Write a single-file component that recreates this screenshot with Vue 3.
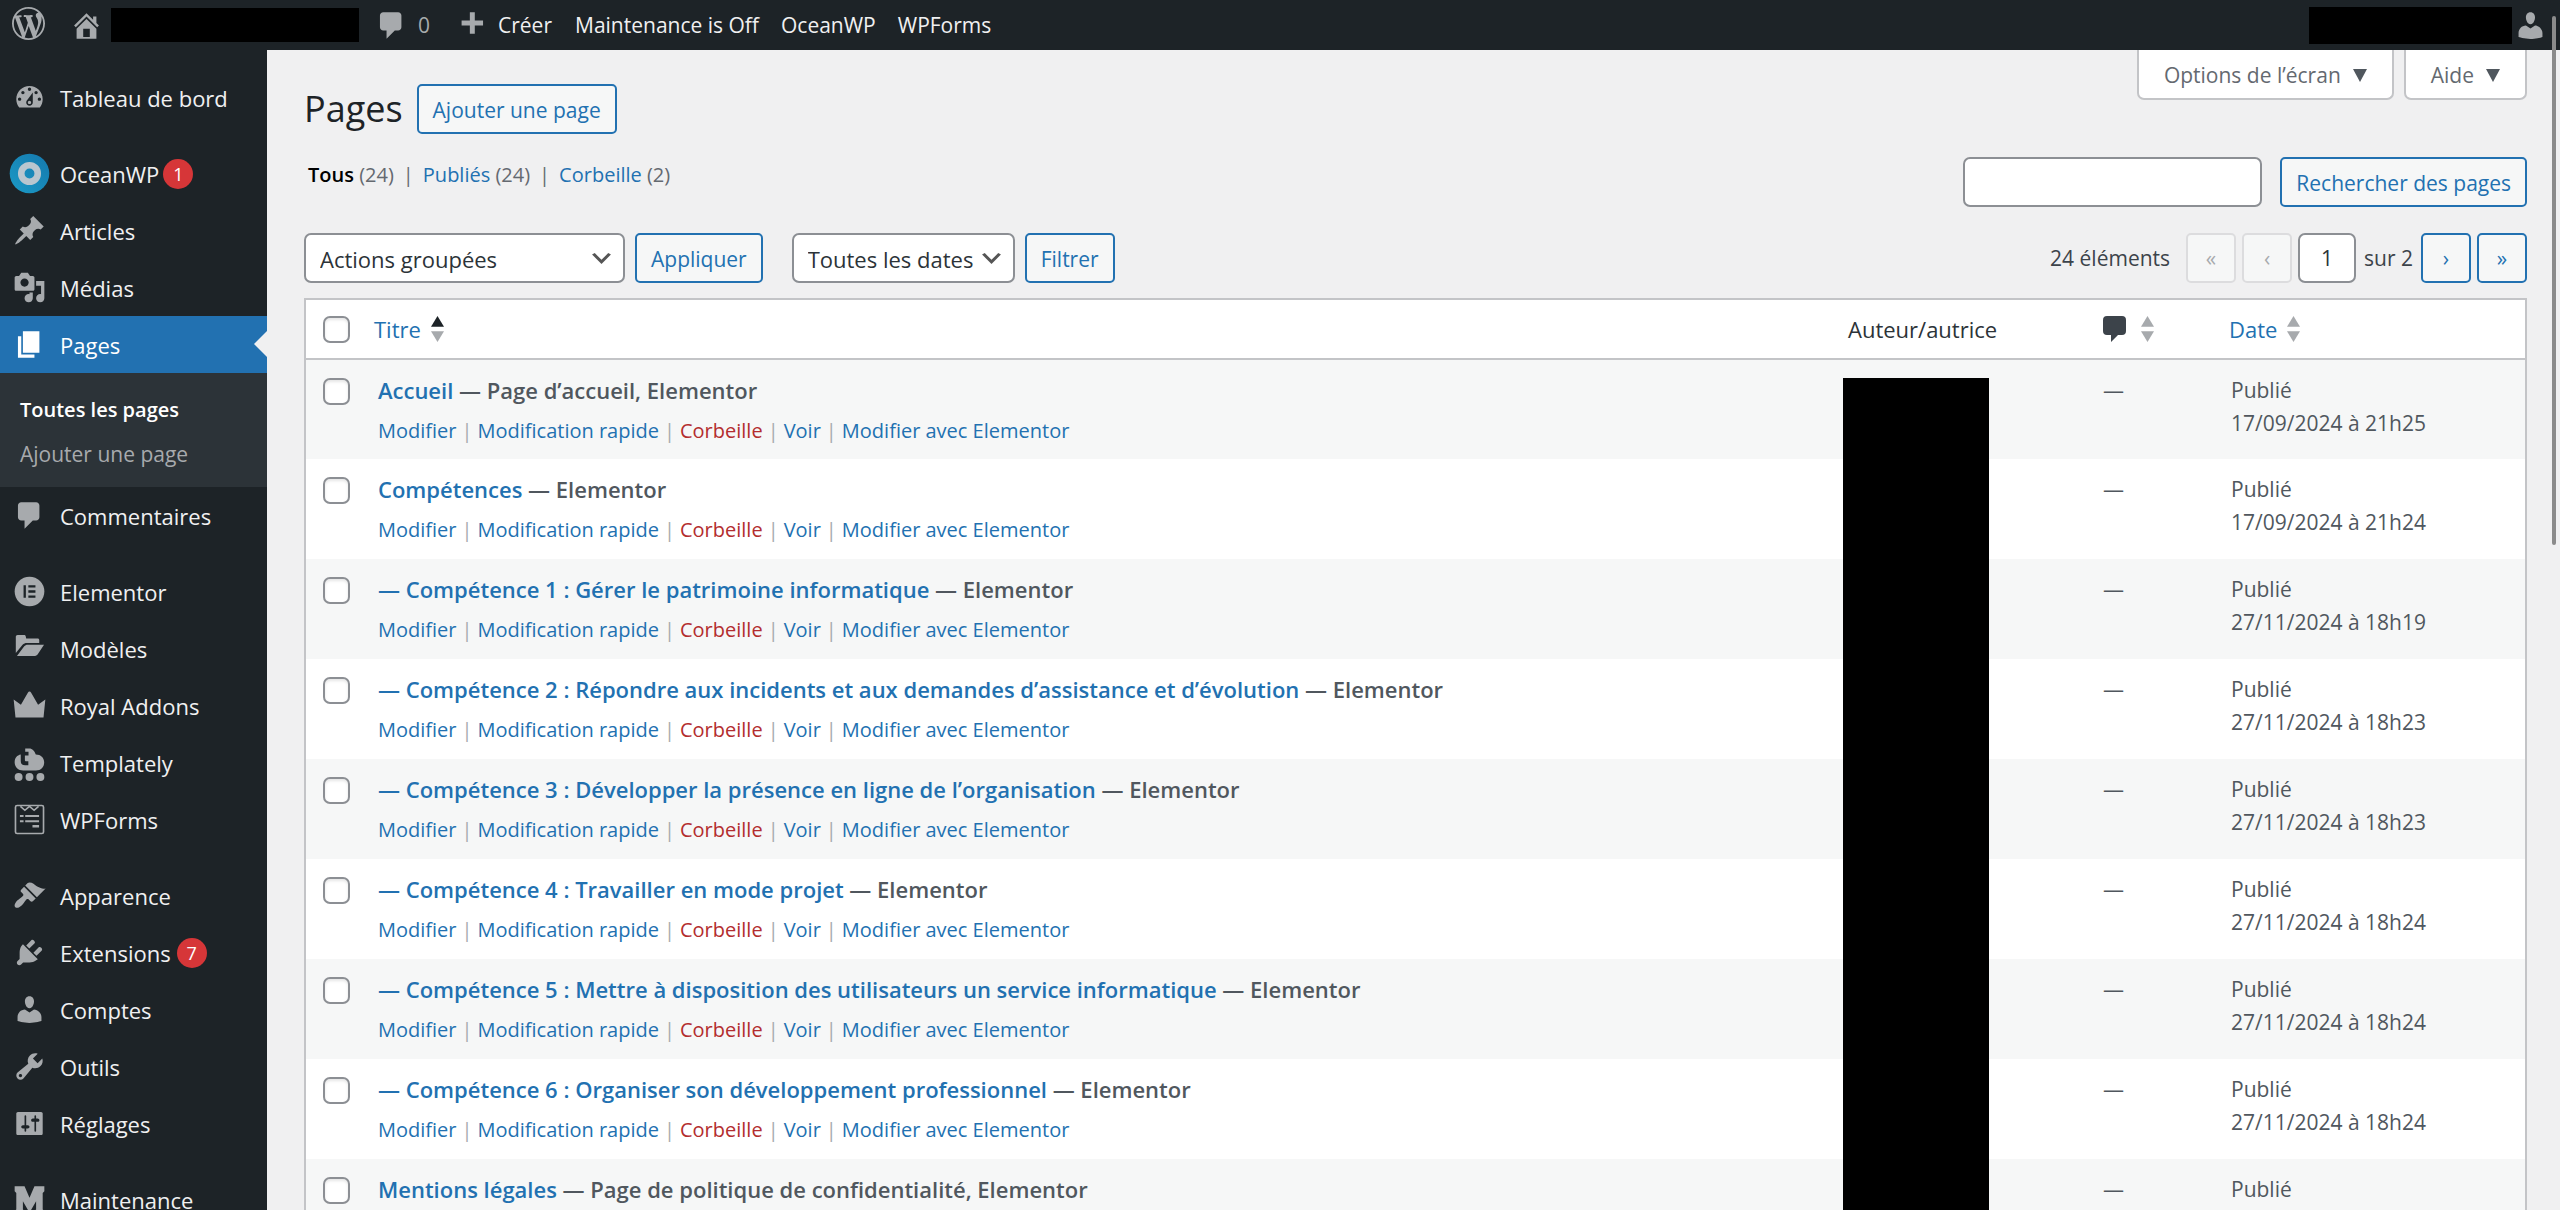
<template>
  <div class="admin">
    <header class="topbar">
      <nav class="topbar-nav" aria-label="Barre d’outils">
        <a class="bar-item bar-logo" href="#" aria-label="WordPress"><svg class="icon" viewBox="0 0 20 20"><path :d="icons.wordpress" /></svg></a>
        <a class="bar-item bar-site" href="#" aria-label="Aller sur le site">
          <svg class="icon" viewBox="0 0 20 20"><path :d="icons.home" /></svg>
          <span class="site-mask"></span>
        </a>
        <a class="bar-item bar-comments" href="#"><svg class="icon" viewBox="0 0 20 20"><path :d="icons.comments" /></svg><span class="muted">0</span></a>
        <a class="bar-item bar-new" href="#"><svg class="icon" viewBox="0 0 20 20"><path :d="icons.plus" /></svg>Créer</a>
        <span class="bar-links">
          <a v-for="label in barLinks" :key="label" class="bar-item" href="#">{{ label }}</a>
        </span>
      </nav>
      <a class="bar-account" href="#" aria-label="Mon compte">
        <span class="account-mask"></span>
        <svg class="icon" viewBox="0 0 20 20"><path :d="icons.users" /></svg>
      </a>
    </header>

    <div class="layout">
      <aside class="sidebar">
        <ul v-for="(group, i) in menu" :key="i" class="menu-group">
          <li v-for="item in group" :key="item.label">
            <a class="menu-link" :class="{ current: item.children }" href="#">
              <svg class="menu-icon" viewBox="0 0 20 20" aria-hidden="true">
                <template v-if="item.icon === 'ocean'">
                  <defs>
                    <linearGradient id="ocean-fill" x1="1" y1="0" x2="0" y2="1">
                      <stop offset="0" stop-color="#1578ad" />
                      <stop offset="1" stop-color="#1b9ac6" />
                    </linearGradient>
                  </defs>
                  <circle cx="10" cy="10" r="12" fill="url(#ocean-fill)" />
                  <circle cx="10" cy="10" r="5" fill="none" stroke="#b9c6cf" stroke-width="4" />
                </template>
                <template v-else-if="item.icon === 'elementor'">
                  <circle cx="10" cy="10" r="9" />
                  <path class="cut" d="M6.4 6.2h1.4v7.6H6.4zM9.3 6.2h4.3v1.4H9.3zM9.3 9.3h4.3v1.4H9.3zM9.3 12.4h4.3v1.4H9.3z" />
                </template>
                <template v-else-if="item.icon === 'templately'">
                  <path d="M7.4 1.5h2.4c2 0 3.2 1.5 4 3.7 3 0 5.1 2 5.1 4.7 0 3-2 5-5 5H6.2c-3 0-5.2-2.1-5.2-5 0-2.6 1.5-4.3 3.7-4.7v3.9c0 1.7.9 2.6 2.6 2.6h2V9.3H8c-.5 0-.8-.3-.8-.8V5.7h2.2V3.5h-2z" />
                  <circle cx="3.4" cy="18.8" r="2.4" />
                  <circle cx="10" cy="18.8" r="2.4" />
                  <circle cx="16.6" cy="18.8" r="2.4" />
                </template>
                <template v-else-if="item.icon === 'wpforms'">
                  <rect class="line" x="1.5" y="1.5" width="17" height="17" rx="1" />
                  <path class="line" d="M4.5 2l2.7 2.4L10 2l2.8 2.4L15.5 2" />
                  <path d="M4.2 7.2h2.2v1.3H4.2zM7.4 7.2h8.4v1.3H7.4zM4.2 10.4h2.2v1.3H4.2zM7.4 10.4h8.4v1.3H7.4zM11.8 13.4h4v1.4h-4z" />
                </template>
                <path v-else fill-rule="evenodd" :d="icons[item.icon]" />
              </svg>
              <span>{{ item.label }}</span>
              <span v-if="item.count" class="count" :class="{ tight: item.icon === 'ocean' }">{{ item.count }}</span>
            </a>
            <ul v-if="item.children" class="submenu">
              <li v-for="(child, c) in item.children" :key="child">
                <a href="#" :class="{ active: c === 0 }">{{ child }}</a>
              </li>
            </ul>
          </li>
        </ul>
      </aside>

      <main class="content">
        <div class="content-head">
          <div class="heading">
            <h1>Pages</h1>
            <button class="button" type="button">Ajouter une page</button>
          </div>
          <div class="screen-meta">
            <button type="button">Options de l’écran <span class="caret"></span></button>
            <button type="button">Aide <span class="caret"></span></button>
          </div>
        </div>

        <div class="filters">
          <ul class="views">
            <li><a class="active" href="#">Tous</a> (24)</li>
            <li><a href="#">Publiés</a> (24)</li>
            <li><a href="#">Corbeille</a> (2)</li>
          </ul>
          <form class="search" @submit.prevent>
            <input v-model="query" class="field" type="search" aria-label="Rechercher des pages">
            <button class="button" type="submit">Rechercher des pages</button>
          </form>
        </div>

        <div class="tablenav">
          <div class="tablenav-group">
            <select v-model="action" class="field select-action" aria-label="Actions groupées">
              <option>Actions groupées</option>
            </select>
            <button class="button" type="button">Appliquer</button>
          </div>
          <div class="tablenav-group">
            <select v-model="month" class="field select-date" aria-label="Filtrer par date">
              <option>Toutes les dates</option>
            </select>
            <button class="button" type="button">Filtrer</button>
          </div>
          <div class="pagination">
            <span class="total">24 éléments</span>
            <button class="button square" type="button" disabled aria-label="Première page">«</button>
            <button class="button square" type="button" disabled aria-label="Page précédente">‹</button>
            <input v-model="page" class="field page-field" type="text" aria-label="Page actuelle">
            <span class="page-total">sur 2</span>
            <button class="button square" type="button" aria-label="Page suivante">›</button>
            <button class="button square" type="button" aria-label="Dernière page">»</button>
          </div>
        </div>

        <div class="table-wrap">
          <table class="pages-table">
            <colgroup>
              <col class="col-check">
              <col>
              <col class="col-author">
              <col class="col-comments">
              <col class="col-date">
            </colgroup>
            <thead>
              <tr>
                <th class="cell-check"><input type="checkbox" aria-label="Tout sélectionner"></th>
                <th class="cell-title">
                  <a class="sortable" href="#">Titre<svg class="sort asc" viewBox="0 0 12 24"><path d="M0 10L6 0l6 10z" /><path d="M0 14h12L6 24z" /></svg></a>
                </th>
                <th class="cell-author">Auteur/autrice</th>
                <th class="cell-comments">
                  <a class="sortable" href="#" aria-label="Commentaires">
                    <svg class="bubble" viewBox="0 0 23 26"><path d="M4 0h15a4 4 0 0 1 4 4v11a4 4 0 0 1-4 4h-4l-7 7v-7H4a4 4 0 0 1-4-4V4a4 4 0 0 1 4-4z" /></svg>
                    <svg class="sort" viewBox="0 0 12 24"><path d="M0 10L6 0l6 10z" /><path d="M0 14h12L6 24z" /></svg>
                  </a>
                </th>
                <th class="cell-date">
                  <a class="sortable" href="#">Date<svg class="sort" viewBox="0 0 12 24"><path d="M0 10L6 0l6 10z" /><path d="M0 14h12L6 24z" /></svg></a>
                </th>
              </tr>
            </thead>
            <tbody>
              <tr v-for="row in rows" :key="row.title">
                <td class="cell-check"><input type="checkbox" :aria-label="'Sélectionner ' + row.title"></td>
                <td class="cell-title">
                  <strong><a href="#">{{ row.title }}</a> — {{ row.state }}</strong>
                  <div class="row-actions">
                    <a href="#">Modifier</a><i>|</i><a href="#">Modification rapide</a><i>|</i><a class="trash" href="#">Corbeille</a><i>|</i><a href="#">Voir</a><i>|</i><a href="#">Modifier avec Elementor</a>
                  </div>
                </td>
                <td></td>
                <td class="cell-comments">—</td>
                <td class="cell-date">Publié<br>{{ row.date }}</td>
              </tr>
            </tbody>
          </table>
          <div class="author-mask"></div>
        </div>
      </main>
    </div>
    <div class="scroll-thumb"></div>
  </div>
</template>

<script setup>
import { ref } from 'vue';

const query = ref('');
const action = ref('Actions groupées');
const month = ref('Toutes les dates');
const page = ref('1');

const barLinks = ['Maintenance is Off', 'OceanWP', 'WPForms'];

const menu = [
  [{ label: 'Tableau de bord', icon: 'dashboard' }],
  [
    { label: 'OceanWP', icon: 'ocean', count: 1 },
    { label: 'Articles', icon: 'post' },
    { label: 'Médias', icon: 'media' },
    { label: 'Pages', icon: 'page', children: ['Toutes les pages', 'Ajouter une page'] },
    { label: 'Commentaires', icon: 'comments' },
  ],
  [
    { label: 'Elementor', icon: 'elementor' },
    { label: 'Modèles', icon: 'folder' },
    { label: 'Royal Addons', icon: 'crown' },
    { label: 'Templately', icon: 'templately' },
    { label: 'WPForms', icon: 'wpforms' },
  ],
  [
    { label: 'Apparence', icon: 'appearance' },
    { label: 'Extensions', icon: 'plugins', count: 7 },
    { label: 'Comptes', icon: 'users' },
    { label: 'Outils', icon: 'tools' },
    { label: 'Réglages', icon: 'settings' },
  ],
  [{ label: 'Maintenance', icon: 'maintenance' }],
];

const rows = [
  { title: 'Accueil', state: 'Page d’accueil, Elementor', date: '17/09/2024 à 21h25' },
  { title: 'Compétences', state: 'Elementor', date: '17/09/2024 à 21h24' },
  { title: '— Compétence 1 : Gérer le patrimoine informatique', state: 'Elementor', date: '27/11/2024 à 18h19' },
  { title: '— Compétence 2 : Répondre aux incidents et aux demandes d’assistance et d’évolution', state: 'Elementor', date: '27/11/2024 à 18h23' },
  { title: '— Compétence 3 : Développer la présence en ligne de l’organisation', state: 'Elementor', date: '27/11/2024 à 18h23' },
  { title: '— Compétence 4 : Travailler en mode projet', state: 'Elementor', date: '27/11/2024 à 18h24' },
  { title: '— Compétence 5 : Mettre à disposition des utilisateurs un service informatique', state: 'Elementor', date: '27/11/2024 à 18h24' },
  { title: '— Compétence 6 : Organiser son développement professionnel', state: 'Elementor', date: '27/11/2024 à 18h24' },
  { title: 'Mentions légales', state: 'Page de politique de confidentialité, Elementor', date: '17/09/2024 à 21h24' },
];

const icons = {
  wordpress: 'M20 10c0-5.51-4.49-10-10-10C4.48 0 0 4.49 0 10c0 5.52 4.48 10 10 10 5.51 0 10-4.48 10-10zM7.78 15.37L4.37 6.22c.55-.02 1.17-.08 1.17-.08.5-.06.44-1.13-.06-1.11 0 0-1.45.11-2.37.11-.18 0-.37 0-.58-.01C4.12 2.69 6.87 1.11 10 1.11c2.33 0 4.45.87 6.05 2.34-.68-.11-1.65.39-1.65 1.58 0 .74.45 1.36.9 2.1.35.61.55 1.36.55 2.46 0 1.49-1.4 5-1.4 5l-3.03-8.37c.54-.02.82-.17.82-.17.5-.05.44-1.25-.06-1.22 0 0-1.44.12-2.38.12-.87 0-2.33-.12-2.33-.12-.5-.03-.56 1.2-.06 1.22l.92.08 1.26 3.41zM17.41 10c.24-.64.74-1.87.43-4.25.7 1.29 1.05 2.71 1.05 4.25 0 3.29-1.73 6.24-4.4 7.78.97-2.59 1.94-5.2 2.92-7.78zM6.1 18.09C3.12 16.65 1.11 13.53 1.11 10c0-1.3.23-2.48.72-3.59C3.25 10.3 4.67 14.2 6.1 18.09zm4.03-6.63l2.58 6.98c-.86.29-1.76.45-2.71.45-.79 0-1.57-.11-2.29-.33.81-2.38 1.62-4.74 2.42-7.1z',
  home: 'M16 8.5l1.53 1.53-1.06 1.06L10 4.6l-6.47 6.49-1.06-1.06L10 2.5l4 4v-2h2v4zm-6-2.46l6 5.99V18H4v-5.97zM12 17v-5H8v5h4z',
  comments: 'M5 2h9c1.1 0 2 .9 2 2v7c0 1.1-.9 2-2 2h-2l-5 5v-5H5c-1.1 0-2-.9-2-2V4c0-1.1.9-2 2-2z',
  plus: 'M17 7v3h-5v5H9v-5H4V7h5V2h3v5h5z',
  dashboard: 'M3.76 16h12.48c1.1-1.37 1.76-3.11 1.76-5 0-4.42-3.58-8-8-8s-8 3.58-8 8c0 1.89.66 3.63 1.76 5zM10 4c.55 0 1 .45 1 1s-.45 1-1 1-1-.45-1-1 .45-1 1-1zM6 6c.55 0 1 .45 1 1s-.45 1-1 1-1-.45-1-1 .45-1 1-1zm8 0c.55 0 1 .45 1 1s-.45 1-1 1-1-.45-1-1 .45-1 1-1zm-5.37 5.55L12 7v6c0 1.1-.9 2-2 2s-2-.9-2-2c0-.57.24-1.08.63-1.45zM4 10c.55 0 1 .45 1 1s-.45 1-1 1-1-.45-1-1 .45-1 1-1zm12 0c.55 0 1 .45 1 1s-.45 1-1 1-1-.45-1-1 .45-1 1-1zm-5 3c0-.55-.45-1-1-1s-1 .45-1 1 .45 1 1 1 1-.45 1-1z',
  post: 'M10.44 3.02l1.82-1.82 6.36 6.35-1.83 1.82c-1.05-.68-2.48-.57-3.41.36l-.75.75c-.92.93-1.04 2.35-.35 3.41l-1.83 1.82-2.41-2.41-2.8 2.79c-.42.42-3.38 2.71-3.8 2.29s1.86-3.39 2.28-3.81l2.79-2.79L4.1 9.36l1.83-1.82c1.05.69 2.48.57 3.4-.36l.75-.75c.93-.92 1.05-2.35.36-3.41z',
  media: 'M13 11V4c0-.55-.45-1-1-1h-1.67L9 1H5L3.67 3H2c-.55 0-1 .45-1 1v7c0 .55.45 1 1 1h10c.55 0 1-.45 1-1zM7 4.5c1.38 0 2.5 1.12 2.5 2.5S8.38 9.5 7 9.5 4.5 8.38 4.5 7 5.62 4.5 7 4.5zM14 6h5v10.5c0 1.38-1.12 2.5-2.5 2.5S14 17.88 14 16.5s1.12-2.5 2.5-2.5c.17 0 .34.02.5.05V9h-3V6zm-4 8.05V13h2v3.5c0 1.38-1.12 2.5-2.5 2.5S7 17.88 7 16.5 8.12 14 9.5 14c.17 0 .34.02.5.05z',
  page: 'M6 15V2h10v13H6zm-1 1h8v2H3V5h2v11z',
  folder: 'M2.8 1.8h3.9c.5 0 .9.3 1 .8l.3 1.3h6.9c.6 0 1 .4 1 1v1.7H8.4c-1 0-1.9.4-2.6 1.2l-4.1 5V2.9c0-.6.5-1.1 1.1-1.1zM8.9 7.7h9.9l-3.7 5.7c-.4.7-1 1.1-1.8 1.1H2.4l4.4-5.8c.5-.7 1.2-1 2.1-1z',
  crown: 'M.4 6.3l4.4 3.3L9 2.2c.5-.9 1.5-.9 2 0l4.2 7.4 4.4-3.3-1.1 11h-17z',
  appearance: 'M14.48 11.06L7.41 3.99l1.5-1.5c.5-.56 2.3-.47 3.51.32 1.21.8 1.43 1.28 2.91 2.1 1.18.64 2.45 1.26 4.45.85zm-.71.71L6.7 4.7 4.93 6.47c-.39.39-.39 1.02 0 1.41l1.06 1.06c.39.39.39 1.03 0 1.42-.6.6-1.43 1.11-2.21 1.69-.35.26-.7.53-1.01.84C1.43 14.23.4 16.08 1.4 17.07c.99 1 2.84-.03 4.18-1.36.31-.31.58-.66.85-1.02.57-.78 1.08-1.61 1.69-2.21.39-.39 1.02-.39 1.41 0l1.06 1.06c.39.39 1.02.39 1.41 0z',
  plugins: 'M13.11 4.36L9.87 7.6 8 5.73l3.24-3.24c.35-.34 1.05-.2 1.56.32.52.51.66 1.21.31 1.55zm-8 1.77l.91-1.12 9.01 9.01-1.19.84c-.71.71-2.63 1.16-3.82 1.16H6.14L4.9 17.26c-.59.59-1.54.59-2.12 0-.59-.58-.59-1.53 0-2.12l1.24-1.24v-3.88c0-1.13.4-3.19 1.09-3.89zm7.26 3.97l3.24-3.24c.34-.35 1.04-.21 1.55.31.52.51.66 1.21.31 1.55l-3.24 3.25z',
  users: 'M10 9.25c-2.27 0-2.73-3.44-2.73-3.44C7 4.02 7.82 2 9.97 2c2.16 0 2.98 2.02 2.71 3.81 0 0-.41 3.44-2.68 3.44zm0 2.57L12.72 10c2.39 0 4.52 2.33 4.52 4.53v2.49s-3.65 1.13-7.24 1.13c-3.65 0-7.24-1.13-7.24-1.13v-2.49c0-2.25 1.94-4.48 4.47-4.48z',
  tools: 'M16.68 9.77c-1.34 1.34-3.3 1.67-4.95.99l-5.41 6.52c-.99.99-2.59.99-3.58 0s-.99-2.59 0-3.57l6.52-5.42c-.68-1.65-.35-3.61.99-4.95 1.28-1.28 3.12-1.62 4.72-1.06l-2.89 2.89 2.82 2.82 2.86-2.87c.53 1.58.18 3.39-1.08 4.65zM3.81 16.21c.4.39 1.04.39 1.43 0 .4-.4.4-1.04 0-1.43-.39-.4-1.03-.4-1.43 0-.39.39-.39 1.03 0 1.43z',
  settings: 'M18 16V4c0-.55-.45-1-1-1H3c-.55 0-1 .45-1 1v12c0 .55.45 1 1 1h14c.55 0 1-.45 1-1zM8 11h1c.55 0 1 .45 1 1s-.45 1-1 1H8v1.5c0 .28-.22.5-.5.5s-.5-.22-.5-.5V13H6c-.55 0-1-.45-1-1s.45-1 1-1h1V5.5c0-.28.22-.5.5-.5s.5.22.5.5V11zm5-2h-1c-.55 0-1-.45-1-1s.45-1 1-1h1V5.5c0-.28.22-.5.5-.5s.5.22.5.5V7h1c.55 0 1 .45 1 1s-.45 1-1 1h-1v5.5c0 .28-.22.5-.5.5s-.5-.22-.5-.5V9z',
  maintenance: 'M1 2h6l3 7 3-7h6v3l-1 1v10l1 1v3h-6v-3l1-1v-5l-4 7-4-7v5l1 1v3H1v-3l1-1V6L1 5z',
};
</script>

<style>
html, body { overflow: hidden; background: #f0f0f1; }
</style>

<style scoped>
* { box-sizing: border-box; }
ul { margin: 0; padding: 0; list-style: none; }
a { color: #2271b1; text-decoration: none; }
button, input, select { font: inherit; margin: 0; }

.admin { position: relative; display: flex; flex-direction: column; height: 100vh; overflow: hidden; background: #f0f0f1; color: #3c434a; font-family: "Open Sans", "Noto Sans", sans-serif; font-size: 21px; line-height: 32px; }

.topbar { display: flex; flex: none; align-items: center; justify-content: space-between; height: 50px; background: #1d2327; }
.topbar-nav { display: flex; align-items: center; padding-left: 12px; gap: 25px; }
.bar-item { display: flex; align-items: center; color: #f0f0f1; }
.bar-logo { margin-bottom: 3px; }
.icon { width: 33px; height: 33px; fill: #a7aaad; }
.bar-site { gap: 8px; }
.site-mask { width: 248px; height: 34px; background: #000; }
.bar-comments { gap: 10px; margin-left: -9px; }
.muted { color: #a7aaad; }
.bar-new { gap: 10px; }
.bar-links { display: flex; gap: 22px; margin-left: -2px; }
.bar-account { display: flex; align-items: center; gap: 2px; padding-right: 13px; }
.account-mask { width: 203px; height: 37px; background: #000; }

.layout { display: flex; flex: 1; min-height: 0; }
.sidebar { flex: none; width: 267px; padding-top: 19px; background: #1d2327; font-size: 22px; overflow: hidden; }
.menu-group { margin-bottom: 19px; }
.menu-link { position: relative; display: flex; align-items: center; height: 57px; padding-left: 13px; gap: 14px; color: #f0f0f1; }
.menu-icon { flex: none; width: 33px; height: 33px; fill: #a7aaad; overflow: visible; }
.menu-icon .cut { fill: #1d2327; }
.menu-icon .line { fill: none; stroke: #a7aaad; stroke-width: 1; }
.menu-link.current { background: #2271b1; color: #fff; }
.menu-link.current .menu-icon { fill: #fff; }
.menu-link.current::after { content: ""; position: absolute; right: 0; top: 15px; border: 13px solid transparent; border-left: 0; border-right-color: #f0f0f1; }
.count { width: 30px; height: 30px; margin-left: -8px; border-radius: 50%; background: #d63638; color: #fff; font-size: 18px; line-height: 30px; text-align: center; }
.count.tight { margin-left: -10px; }
.submenu { padding: 14px 0 10px; background: #2c3338; font-size: 21px; }
.submenu a { display: block; height: 45px; padding-left: 20px; line-height: 45px; color: #a7aaad; }
.submenu .active { color: #fff; font-size: 20px; font-weight: 600; }

.content { flex: 1; min-width: 0; padding: 0 33px 0 37px; }
.content-head { display: flex; justify-content: space-between; align-items: flex-start; height: 102px; }
.heading { display: flex; align-items: center; gap: 14px; padding-top: 34px; }
h1 { margin: 0; color: #1d2327; font-size: 36px; font-weight: 400; line-height: 50px; }
.button { height: 50px; padding: 2px 14px 0; border: 2px solid #2271b1; border-radius: 5px; background: #f6f7f7; color: #2271b1; line-height: 44px; white-space: nowrap; }
.button:disabled { border-color: #dcdcde; color: #a7aaad; }
.screen-meta { display: flex; gap: 10px; }
.screen-meta button { display: flex; align-items: center; gap: 12px; height: 50px; padding: 2px 25px 0; border: 2px solid #c3c4c7; border-top: 0; border-radius: 0 0 7px 7px; background: #fff; color: #646970; }
.caret { border: 7px solid transparent; border-top: 13px solid #50575e; border-bottom: 0; }

.filters { display: flex; justify-content: space-between; align-items: flex-start; height: 81px; }
.views { display: flex; padding: 7px 0 0 4px; color: #646970; font-size: 20px; }
.views li + li::before { content: "|"; padding: 0 9px; }
.views .active { color: #000; font-weight: 600; }
.search { display: flex; gap: 18px; padding-top: 5px; }
.field { height: 50px; border: 2px solid #8c8f94; border-radius: 7px; background: #fff; color: #2c3338; outline: none; }
.search .field { width: 299px; padding: 0 13px; }

.tablenav { display: flex; align-items: center; height: 50px; gap: 29px; }
.tablenav-group { display: flex; gap: 10px; }
select.field { padding: 2px 14px 0; appearance: none; background: #fff url("data:image/svg+xml,%3Csvg xmlns='http://www.w3.org/2000/svg' viewBox='0 0 20 20'%3E%3Cpath d='M5 6l5 5 5-5 2 1-7 7-7-7 2-1z' fill='%23555'/%3E%3C/svg%3E") no-repeat right 8px center / 27px 27px; font-size: 22px; }
.select-action { width: 321px; }
.select-date { width: 223px; }
.pagination { display: flex; align-items: center; gap: 6px; margin-left: auto; }
.total { margin-right: 10px; }
.square { width: 50px; padding: 0; }
.page-field { width: 58px; text-align: center; }
.page-total { margin: 0 2px; }

.table-wrap { position: relative; margin-top: 15px; border: 2px solid #c3c4c7; background: #fff; }
.pages-table { width: 100%; border-collapse: collapse; table-layout: fixed; }
.col-check { width: 55px; }
.col-author { width: 250px; }
.col-comments { width: 126px; }
.col-date { width: 314px; }
th { height: 59px; padding: 0; border-bottom: 2px solid #c3c4c7; color: #2c3338; font-size: 22px; font-weight: 400; text-align: left; }
td { height: 100px; padding: 14px 0 0; vertical-align: top; color: #50575e; }
tbody tr:nth-child(odd) { background: #f6f7f7; }
.cell-check { padding-left: 17px; }
td.cell-check { padding-top: 18px; }
input[type="checkbox"] { display: block; width: 27px; height: 27px; appearance: none; border: 2px solid #8c8f94; border-radius: 7px; background: #fff; box-shadow: inset 0 2px 3px rgba(0, 0, 0, 0.1); }
th.cell-title { padding-left: 13px; }
td.cell-title { padding-left: 17px; }
th.cell-author { padding-left: 13px; }
th.cell-comments, td.cell-comments { padding-left: 18px; }
th.cell-date { padding-left: 18px; }
td.cell-date { padding-left: 20px; line-height: 33px; }
.cell-title strong { display: block; font-size: 22px; font-weight: 600; }
.sortable { display: flex; align-items: center; gap: 10px; }
.sort { width: 13px; height: 26px; fill: #a7aaad; }
.sort.asc path:first-child { fill: #1d2327; }
.bubble { width: 23px; height: 26px; margin-right: 5px; fill: #3c434a; }
.row-actions { display: flex; margin-top: 9px; font-size: 20px; white-space: nowrap; }
.row-actions i { padding: 0 5px; color: #a7aaad; font-style: normal; }
.row-actions .trash { color: #b32d2e; }
.author-mask { position: absolute; top: 78px; right: 536px; bottom: 0; width: 146px; background: #000; }
.scroll-thumb { position: absolute; top: 16px; right: 4px; width: 4px; height: 529px; border-radius: 2px; background: #8b8b8b; }
</style>
